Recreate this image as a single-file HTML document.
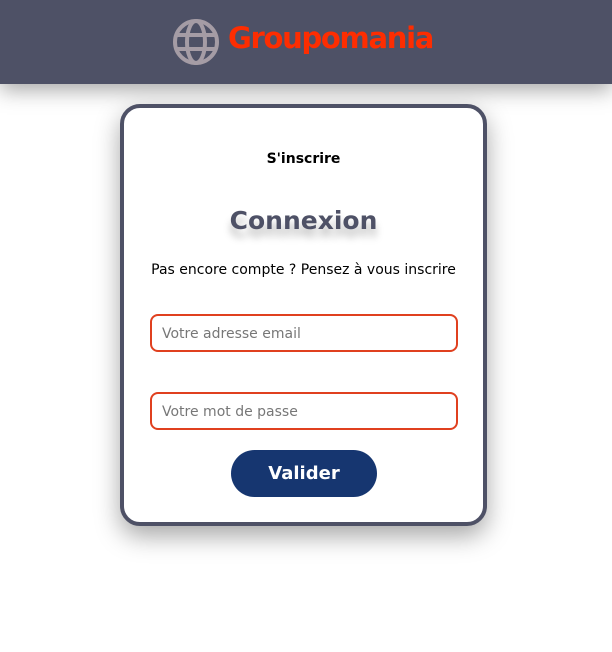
<!DOCTYPE html>
<html><head><meta charset="utf-8"><style>
body{margin:0;width:612px;height:652px;background:#fff;font-family:"DejaVu Sans","Liberation Sans",sans-serif;overflow:hidden;position:relative}
.hd{position:absolute;left:0;top:0;width:612px;height:84px;background:#4e5166;box-shadow:0 6px 20px rgba(0,0,0,.35)}
.logo{position:absolute;left:228px;top:21px;font-size:29px;font-weight:bold;color:#fd2d01;letter-spacing:-1.3px}
.card{position:absolute;left:120px;top:104px;width:359px;height:414px;border:4px solid #4e5166;border-radius:20px;background:#fff;box-shadow:0 10px 25px rgba(0,0,0,.35)}
.t{position:absolute;left:0;width:100%;text-align:center}
.inp{position:absolute;left:26px;width:294px;height:34px;border:2px solid #e0401f;border-radius:8px;font-size:14px;color:#777;line-height:36px;padding-left:10px;box-sizing:content-box}
.btn{position:absolute;left:107px;top:342px;width:146px;height:47px;border-radius:24px;background:#163670;color:#fff;font-size:18px;font-weight:bold;text-align:center;line-height:47px}
</style></head><body>
<div class="hd">
<svg style="position:absolute;left:172px;top:18px" width="48" height="48" viewBox="0 0 48 48" fill="none" stroke="#a59ca5" stroke-width="4"><circle cx="24" cy="24" r="21"/><ellipse cx="24" cy="24" rx="9" ry="21"/><path d="M5 17h38M5 31h38"/></svg>
<div class="logo">Groupomania</div>
</div>
<div class="card">
<div class="t" style="top:98px;font-size:25px;font-weight:bold;color:#4e5166;text-shadow:0 8px 8px rgba(0,0,0,.25)">Connexion</div>
<div class="t" style="top:43px;font-size:14px;font-weight:bold;color:#000">S'inscrire</div>
<div class="t" style="top:154px;font-size:14px;color:#000">Pas encore compte ? Pensez à vous inscrire</div>
<div class="inp" style="top:206px">Votre adresse email</div>
<div class="inp" style="top:284px">Votre mot de passe</div>
<div class="btn">Valider</div>
</div>
</body></html>
